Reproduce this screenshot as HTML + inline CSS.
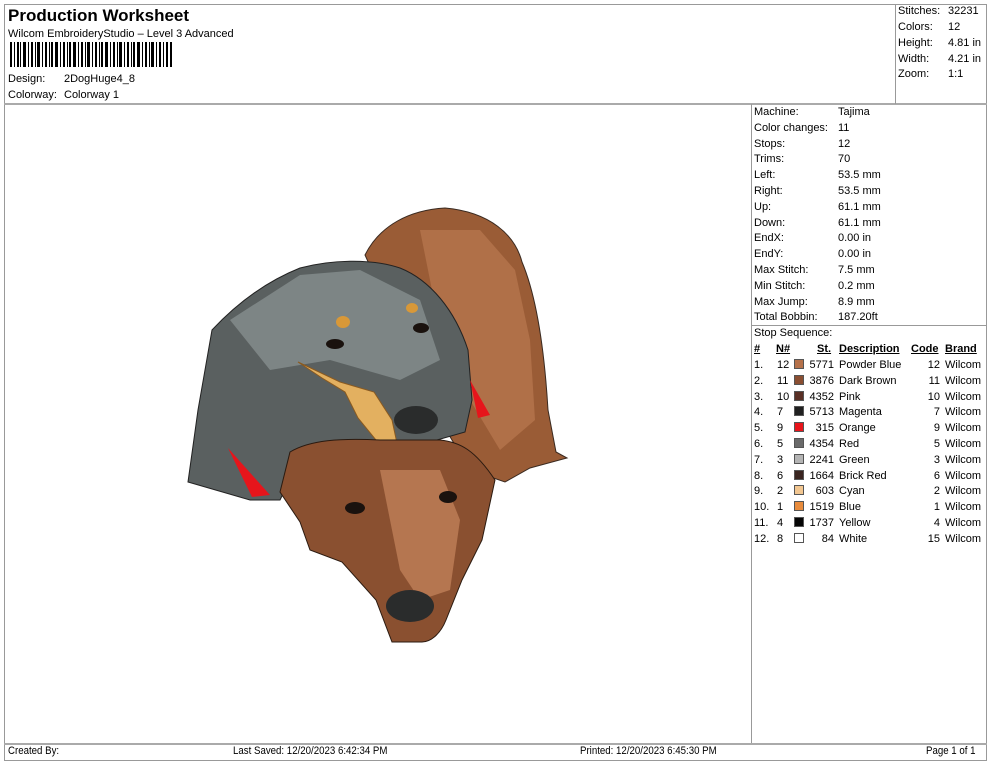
<!DOCTYPE html>
<html><head><meta charset="utf-8"><style>
*{margin:0;padding:0;box-sizing:border-box}
body{width:990px;height:762px;background:#fff;font-family:"Liberation Sans",sans-serif;font-size:11px;color:#000;position:relative;overflow:hidden}
.a{position:absolute;white-space:nowrap;line-height:13px}
.l{position:absolute;background:#999}
.sw{position:absolute;width:10px;height:10px;border:1px solid #555}
.ft{font-size:11px;transform:scaleX(0.88);transform-origin:left center}
</style></head><body>
<div class="l" style="left:4px;top:4px;width:983px;height:1px"></div>
<div class="l" style="left:4px;top:4px;width:1px;height:757px"></div>
<div class="l" style="left:986px;top:4px;width:1px;height:757px"></div>
<div class="l" style="left:4px;top:103px;width:983px;height:2px;background:#aaa"></div>
<div class="l" style="left:895px;top:4px;width:1px;height:100px"></div>
<div class="l" style="left:751px;top:104px;width:1px;height:640px"></div>
<div class="l" style="left:752px;top:325px;width:235px;height:1px"></div>
<div class="l" style="left:4px;top:743px;width:983px;height:2px;background:#aaa"></div>
<div class="l" style="left:4px;top:760px;width:983px;height:1px"></div>

<div class="a" style="left:8px;top:6px;font-size:17px;font-weight:bold;line-height:20px">Production Worksheet</div>
<div class="a" style="left:8px;top:28px">Wilcom EmbroideryStudio – Level 3 Advanced</div>
<svg class="a" style="left:10px;top:42px" width="162" height="25"><g fill="#000">
<rect x="0" y="0" width="2" height="25"/><rect x="4" y="0" width="1" height="25"/><rect x="7" y="0" width="2" height="25"/><rect x="10" y="0" width="1" height="25"/><rect x="13" y="0" width="3" height="25"/><rect x="18" y="0" width="1" height="25"/><rect x="21" y="0" width="2" height="25"/><rect x="25" y="0" width="1" height="25"/><rect x="27" y="0" width="3" height="25"/><rect x="32" y="0" width="1" height="25"/><rect x="35" y="0" width="2" height="25"/><rect x="39" y="0" width="1" height="25"/><rect x="41" y="0" width="2" height="25"/><rect x="45" y="0" width="3" height="25"/><rect x="50" y="0" width="1" height="25"/><rect x="53" y="0" width="2" height="25"/><rect x="57" y="0" width="1" height="25"/><rect x="59" y="0" width="2" height="25"/><rect x="63" y="0" width="3" height="25"/><rect x="68" y="0" width="1" height="25"/><rect x="71" y="0" width="2" height="25"/><rect x="75" y="0" width="1" height="25"/><rect x="77" y="0" width="3" height="25"/><rect x="82" y="0" width="1" height="25"/><rect x="85" y="0" width="2" height="25"/><rect x="89" y="0" width="1" height="25"/><rect x="91" y="0" width="2" height="25"/><rect x="95" y="0" width="3" height="25"/><rect x="100" y="0" width="1" height="25"/><rect x="103" y="0" width="2" height="25"/><rect x="107" y="0" width="1" height="25"/><rect x="109" y="0" width="3" height="25"/><rect x="114" y="0" width="1" height="25"/><rect x="117" y="0" width="2" height="25"/><rect x="121" y="0" width="1" height="25"/><rect x="123" y="0" width="2" height="25"/><rect x="127" y="0" width="3" height="25"/><rect x="132" y="0" width="1" height="25"/><rect x="135" y="0" width="2" height="25"/><rect x="139" y="0" width="1" height="25"/><rect x="141" y="0" width="3" height="25"/><rect x="146" y="0" width="1" height="25"/><rect x="149" y="0" width="2" height="25"/><rect x="153" y="0" width="1" height="25"/><rect x="156" y="0" width="2" height="25"/><rect x="160" y="0" width="2" height="25"/>
</g></svg>
<div class="a" style="left:8px;top:73px">Design:</div><div class="a" style="left:64px;top:73px">2DogHuge4_8</div>
<div class="a" style="left:8px;top:89px">Colorway:</div><div class="a" style="left:64px;top:89px">Colorway 1</div>

<div class="a" style="left:898px;top:5px">Stitches:</div><div class="a" style="left:948px;top:5px">32231</div>
<div class="a" style="left:898px;top:21px">Colors:</div><div class="a" style="left:948px;top:21px">12</div>
<div class="a" style="left:898px;top:37px">Height:</div><div class="a" style="left:948px;top:37px">4.81 in</div>
<div class="a" style="left:898px;top:53px">Width:</div><div class="a" style="left:948px;top:53px">4.21 in</div>
<div class="a" style="left:898px;top:68px">Zoom:</div><div class="a" style="left:948px;top:68px">1:1</div>

<div style="position:absolute;left:754px;top:105px;line-height:15.8px">
Machine:<br>Color changes:<br>Stops:<br>Trims:<br>Left:<br>Right:<br>Up:<br>Down:<br>EndX:<br>EndY:<br>Max Stitch:<br>Min Stitch:<br>Max Jump:<br>Total Bobbin:</div>
<div style="position:absolute;left:838px;top:105px;line-height:15.8px;white-space:nowrap">
Tajima<br>11<br>12<br>70<br>53.5 mm<br>53.5 mm<br>61.1 mm<br>61.1 mm<br>0.00 in<br>0.00 in<br>7.5 mm<br>0.2 mm<br>8.9 mm<br>187.20ft</div>
<div class="a" style="left:754px;top:327px">Stop Sequence:</div>

<div class="a" style="left:754px;top:343px;font-weight:bold;text-decoration:underline">#</div>
<div class="a" style="left:776px;top:343px;font-weight:bold;text-decoration:underline">N#</div>
<div class="a" style="left:817px;top:343px;font-weight:bold;text-decoration:underline">St.</div>
<div class="a" style="left:839px;top:343px;font-weight:bold;text-decoration:underline">Description</div>
<div class="a" style="left:911px;top:343px;font-weight:bold;text-decoration:underline">Code</div>
<div class="a" style="left:945px;top:343px;font-weight:bold;text-decoration:underline">Brand</div>

<div style="position:absolute;left:754px;top:358px;line-height:15.8px">1.<br>2.<br>3.<br>4.<br>5.<br>6.<br>7.<br>8.<br>9.<br>10.<br>11.<br>12.</div>
<div style="position:absolute;left:777px;top:358px;line-height:15.8px">12<br>11<br>10<br>7<br>9<br>5<br>3<br>6<br>2<br>1<br>4<br>8</div>
<div style="position:absolute;left:804px;top:358px;width:30px;text-align:right;line-height:15.8px">5771<br>3876<br>4352<br>5713<br>315<br>4354<br>2241<br>1664<br>603<br>1519<br>1737<br>84</div>
<div style="position:absolute;left:839px;top:358px;line-height:15.8px;white-space:nowrap">Powder Blue<br>Dark Brown<br>Pink<br>Magenta<br>Orange<br>Red<br>Green<br>Brick Red<br>Cyan<br>Blue<br>Yellow<br>White</div>
<div style="position:absolute;left:910px;top:358px;width:30px;text-align:right;line-height:15.8px">12<br>11<br>10<br>7<br>9<br>5<br>3<br>6<br>2<br>1<br>4<br>15</div>
<div style="position:absolute;left:945px;top:358px;line-height:15.8px">Wilcom<br>Wilcom<br>Wilcom<br>Wilcom<br>Wilcom<br>Wilcom<br>Wilcom<br>Wilcom<br>Wilcom<br>Wilcom<br>Wilcom<br>Wilcom</div>
<div class="sw" style="left:794px;top:359px;background:#b5714a"></div>
<div class="sw" style="left:794px;top:375px;background:#8a4e31"></div>
<div class="sw" style="left:794px;top:391px;background:#5a3025"></div>
<div class="sw" style="left:794px;top:406px;background:#202020"></div>
<div class="sw" style="left:794px;top:422px;background:#e8141a"></div>
<div class="sw" style="left:794px;top:438px;background:#6a6a6a"></div>
<div class="sw" style="left:794px;top:454px;background:#b4b4b4"></div>
<div class="sw" style="left:794px;top:470px;background:#3a2520"></div>
<div class="sw" style="left:794px;top:485px;background:#f2c690"></div>
<div class="sw" style="left:794px;top:501px;background:#e88b3c"></div>
<div class="sw" style="left:794px;top:517px;background:#050505"></div>
<div class="sw" style="left:794px;top:533px;background:#fff"></div>

<svg style="position:absolute;left:0;top:0" width="750" height="742">
<path fill="#9a5c36" stroke="#3a2a20" d="M365,255 C380,225 410,210 445,208 C490,212 515,235 522,262 C538,300 545,360 548,410 L556,452 L567,458 L530,468 L505,482 L470,470 L440,420 Z"/>
<polygon fill="#b07048" points="420,230 480,230 515,270 530,340 535,420 500,450 470,400 440,330"/>
<path fill="#5a6060" stroke="#222" d="M188,482 L198,410 L212,330 C240,300 270,280 300,268 C330,260 370,258 400,268 C430,280 455,310 468,350 L472,400 L465,432 L430,442 L400,452 L300,460 L280,500 L250,500 Z"/>
<polygon fill="#7d8585" points="230,320 300,275 360,270 420,300 440,360 400,380 330,360 270,370"/>
<polygon fill="#e6151b" points="228,448 270,495 252,497"/>
<polygon fill="#e6151b" points="470,380 490,415 478,418"/>
<polygon fill="#e3b060" stroke="#8a5a20" points="298,362 322,378 345,392 358,418 380,445 398,448 392,420 374,392 340,382"/>
<ellipse cx="416" cy="420" rx="22" ry="14" fill="#2a2c2c"/>
<path fill="#8a5030" stroke="#2a1a10" d="M290,452 C310,440 340,438 380,440 L440,440 C460,442 475,450 495,480 L482,540 L462,580 L446,620 C440,635 430,642 422,642 L392,642 L376,600 L342,562 L310,550 L300,522 L280,492 Z"/>
<polygon fill="#b57650" points="380,470 440,470 460,520 450,590 420,600 400,570 390,520"/>
<ellipse cx="410" cy="606" rx="24" ry="16" fill="#2a2c2c"/>
<ellipse cx="355" cy="508" rx="10" ry="6" fill="#1a120e"/>
<ellipse cx="448" cy="497" rx="9" ry="6" fill="#1a120e"/>
<ellipse cx="335" cy="344" rx="9" ry="5" fill="#1a120e"/>
<ellipse cx="421" cy="328" rx="8" ry="5" fill="#1a120e"/>
<ellipse cx="343" cy="322" rx="7" ry="6" fill="#d89838"/>
<ellipse cx="412" cy="308" rx="6" ry="5" fill="#d89838"/>
</svg>

<div class="a ft" style="left:8px;top:745px">Created By:</div>
<div class="a ft" style="left:233px;top:745px">Last Saved: 12/20/2023 6:42:34 PM</div>
<div class="a ft" style="left:580px;top:745px">Printed: 12/20/2023 6:45:30 PM</div>
<div class="a ft" style="left:926px;top:745px">Page 1 of 1</div>
</body></html>
